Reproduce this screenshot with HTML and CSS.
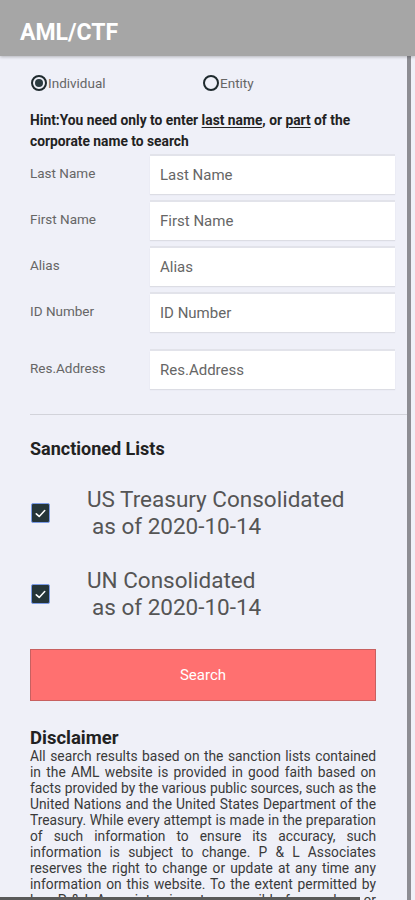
FILE: index.html
```html
<!DOCTYPE html>
<html lang="en">
<head>
<meta charset="utf-8">
<title>AML/CTF</title>
<link rel="stylesheet" href="styles.css">
</head>
<body>
<header class="appbar"><h1 class="appbar-title">AML/CTF</h1></header>
<main class="content">
  <div class="radios">
    <label class="radio-opt radio-individual"><span class="radio radio-on"></span>Individual</label>
    <label class="radio-opt radio-entity"><span class="radio"></span>Entity</label>
  </div>
  <p class="hint">Hint:You need only to enter <u>last name</u>, or <u>part</u> of the corporate name to search</p>
  <div class="form">
    <div class="field"><span class="field-label">Last Name</span><div class="field-input">Last Name</div></div>
    <div class="field"><span class="field-label">First Name</span><div class="field-input">First Name</div></div>
    <div class="field"><span class="field-label">Alias</span><div class="field-input">Alias</div></div>
    <div class="field"><span class="field-label">ID Number</span><div class="field-input">ID Number</div></div>
    <div class="field field-address"><span class="field-label">Res.Address</span><div class="field-input">Res.Address</div></div>
  </div>
  <hr class="divider">
  <h2 class="section-title">Sanctioned Lists</h2>
  <div class="list-item">
    <span class="checkbox"><svg viewBox="0 0 20 20" width="13" height="13"><path d="M3.5 10.5 L8 14.5 L16.5 5.5" fill="none" stroke="#fff" stroke-width="2.4" stroke-linecap="round" stroke-linejoin="round"/></svg></span>
    <div class="list-text">US Treasury Consolidated<br><span class="list-sub">as of 2020-10-14</span></div>
  </div>
  <div class="list-item">
    <span class="checkbox"><svg viewBox="0 0 20 20" width="13" height="13"><path d="M3.5 10.5 L8 14.5 L16.5 5.5" fill="none" stroke="#fff" stroke-width="2.4" stroke-linecap="round" stroke-linejoin="round"/></svg></span>
    <div class="list-text">UN Consolidated<br><span class="list-sub">as of 2020-10-14</span></div>
  </div>
  <button class="search-btn">Search</button>
  <h2 class="disclaimer-title">Disclaimer</h2>
  <p class="disclaimer-body">All search results based on the sanction lists contained in the AML website is provided in good faith based on facts provided by the various public sources, such as the United Nations and the United States Department of the Treasury. While every attempt is made in the preparation of such information to ensure its accuracy, such information is subject to change. P &amp; L Associates reserves the right to change or update at any time any information on this website. To the extent permitted by law, P &amp; L Associates is not responsible for any loss or damage arising from the use of this information.</p>
</main>
<div class="hscroll"></div>
</body>
</html>
```

FILE: styles.css
```css
html, body {
  margin: 0;
  padding: 0;
  height: 900px;
  overflow: hidden;
  background: #eff0f8;
  font-family: Roboto, "Liberation Sans", Arial, sans-serif;
}

.appbar {
  height: 56px;
  background: #a6a6a6;
  display: flex;
  align-items: center;
  padding-left: 20px;
  box-shadow: 0 1px 3px rgba(0,0,0,0.25);
  position: relative;
  z-index: 1;
}

.appbar-title {
  margin: 0;
  color: #fff;
  font-size: 23px;
  font-weight: 700;
  padding-top: 8px;
}

.content {
  width: 377px;
  height: 844px;
  padding: 17px 0 0 30px;
  border-right: 4px solid #8d8d93;
  box-sizing: content-box;
  overflow: hidden;
}

.radios {
  display: flex;
  height: 20px;
  align-items: center;
  margin-bottom: 17px;
}

.radio-opt {
  display: flex;
  align-items: center;
  font-size: 13.5px;
  color: #666;
}

.radio-individual { width: 172px; margin-left: 1px; }

.radio {
  width: 12px;
  height: 12px;
  border: 2px solid #1f2a2e;
  border-radius: 50%;
  display: inline-flex;
  align-items: center;
  justify-content: center;
  margin-right: 1px;
}

.radio-on::after {
  content: "";
  width: 8px;
  height: 8px;
  border-radius: 50%;
  background: #2b3b40;
}

.hint {
  margin: 0 0 4px 0;
  font-size: 13.8px;
  line-height: 21px;
  font-weight: 700;
  color: #222;
  width: 345px;
}

.hint u { text-decoration-thickness: 1px; text-underline-offset: 2px; }

.form {
  display: flex;
  flex-direction: column;
  gap: 8px;
}

.field {
  display: flex;
  align-items: flex-start;
}

.field-address { margin-top: 11px; }

.field-label {
  width: 120px;
  font-size: 13.5px;
  color: #666;
  padding-top: 9px;
}

.field-input {
  width: 235px;
  height: 38px;
  background: #fff;
  padding-left: 10px;
  display: flex;
  align-items: center;
  font-size: 15px;
  color: #666;
  box-shadow: 0 -2px 0 #e2e3ea, 0 1px 1px #dcdde4;
}

.divider {
  margin: 25px 0 0 0;
  border: none;
  border-top: 1px solid #d2d3da;
}

.section-title {
  margin: 24px 0 0 0;
  font-size: 18px;
  line-height: 20px;
  font-weight: 700;
  color: #222;
}

.list-item {
  display: flex;
  align-items: center;
  margin-top: 27px;
}

.checkbox {
  width: 17px;
  height: 18px;
  margin-left: 1px;
  background: #253539;
  border: 1px solid #7b9be6;
  border-radius: 2px;
  display: flex;
  align-items: center;
  justify-content: center;
  margin-right: 37px;
  flex: none;
}

.list-text {
  font-size: 22.5px;
  line-height: 27px;
  color: #555;
}

.list-sub { padding-left: 5px; }

.search-btn {
  display: block;
  margin-top: 28px;
  width: 346px;
  height: 52px;
  background: #ff7070;
  border: 1px solid #c86060;
  color: #fff;
  font-family: Roboto, "Liberation Sans", Arial, sans-serif;
  font-size: 15px;
  padding: 0;
}

.disclaimer-title {
  margin: 27px 0 0 0;
  font-size: 18.5px;
  line-height: 20px;
  font-weight: 700;
  color: #222;
}

.disclaimer-body {
  margin: 0;
  width: 346px;
  font-size: 13.8px;
  line-height: 16px;
  color: #3a3a3a;
  text-align: justify;
}

.hscroll {
  position: fixed;
  left: 0;
  bottom: 0;
  width: 360px;
  height: 3px;
  background: #5a5a5a;
}
```
